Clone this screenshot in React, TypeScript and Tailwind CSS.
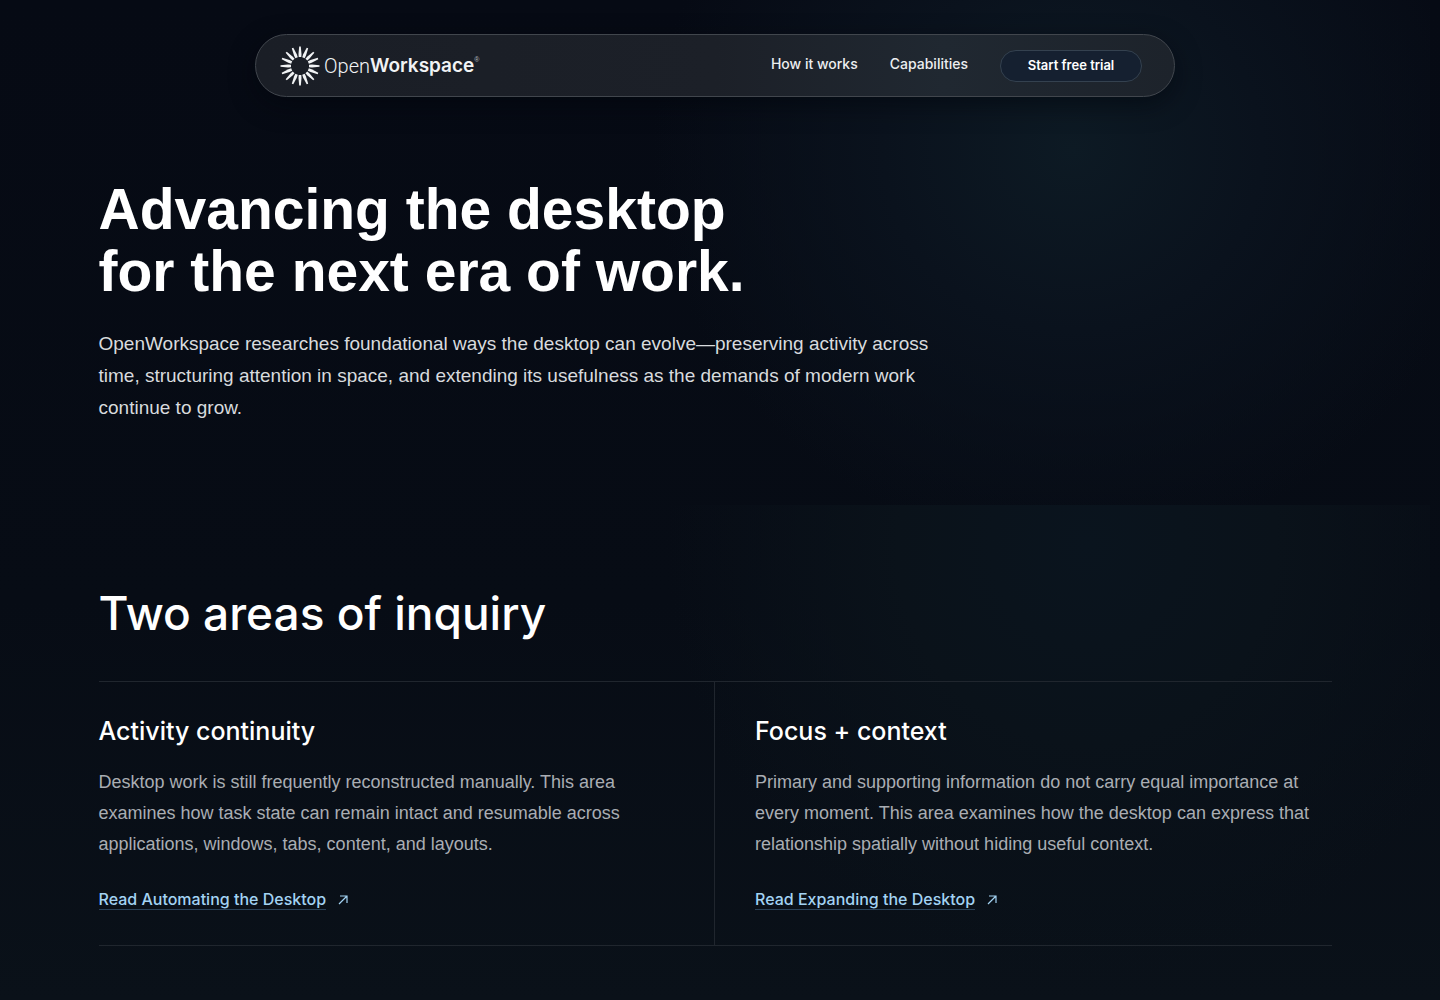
import React from "react";

const rays = Array.from({ length: 16 }, (_, i) => i * 22.5);

function Logo() {
  return (
    <a href="#home" aria-label="OpenWorkspace home" className="flex items-center gap-1 text-[#f1f3f5]">
      <svg viewBox="-20 -20 40 40" className="size-10" fill="currentColor" aria-hidden="true">
        {rays.map((a) => (
          <path key={a} d="M-1.3 -9 L-1.5 -12 L-0.8 -19.5 H0.8 L1.5 -12 L1.3 -9 Z" transform={`rotate(${a})`} />
        ))}
      </svg>
      <span className="flex items-start text-xl leading-6">
        <span className="font-[Roboto,sans-serif] font-light">Open</span>
        <span className="font-[Inter,sans-serif] text-[19px] font-semibold">Workspace</span>
        <span className="text-[7px] leading-3 text-[#b4b8bd]">®</span>
      </span>
    </a>
  );
}

function Arrow() {
  return (
    <svg viewBox="0 0 10 10" className="size-[10px]" fill="none" stroke="currentColor" strokeWidth="1.2" aria-hidden="true">
      <path d="M1 9 9 1M2 1H9V8" />
    </svg>
  );
}

function Area({ title, text, link, className }: { title: string; text: string; link: string; className: string }) {
  return (
    <article className={className}>
      <h3 className="font-[Inter,sans-serif] text-[25px] leading-[34px] font-medium text-white">{title}</h3>
      <p className="mt-[19px] text-lg leading-[31px] text-[#a9adb3]">{text}</p>
      <a href="#read" className="mt-[29px] inline-flex items-center gap-3 font-[Inter,sans-serif] text-base leading-5 font-medium text-[#a3d3f3]">
        <span className="border-b border-[#2b4258]">{link}</span>
        <Arrow />
      </a>
    </article>
  );
}

export default function App() {
  return (
    <div className="min-h-screen bg-[linear-gradient(180deg,#060a14_0%,#070c15_60%,#0a1119_100%)] pr-[10px] font-['Liberation_Sans',Arial,sans-serif] text-white">
      <div className="bg-[radial-gradient(ellipse_420px_400px_at_75%_150px,#0d1a24_0%,#0a121d_45%,transparent_100%)]">
        <header className="px-6 pt-[34px]">
          <nav className="mx-auto flex h-[63px] max-w-[920px] items-center justify-between rounded-full border border-[#41464d] bg-[linear-gradient(90deg,#1a1e26,#1c2028_50%,#202831_75%,#1d232b)] pr-8 pl-6 shadow-[0_8px_24px_#02050c80]">
            <Logo />
            <div className="flex items-center gap-8 font-[Inter,sans-serif] text-sm font-medium text-[#eceef0]">
              <a href="#how" className="pb-1">How it works</a>
              <a href="#capabilities" className="pb-1">Capabilities</a>
              <button type="button" className="h-8 w-[142px] rounded-full border border-[#34414f] bg-[#152030] text-[13px] font-semibold text-white">
                Start free trial
              </button>
            </div>
          </nav>
        </header>
        <section className="mx-auto max-w-[1233px] pt-[81px] pb-[81px]">
          <h1 className="text-[57px] leading-[62px] font-bold">
            Advancing the desktop
            <br />
            for the next era of work.
          </h1>
          <p className="mt-[26px] max-w-[860px] text-[19px] leading-8 text-[#d8dbde]">
            OpenWorkspace researches foundational ways the desktop can evolve—preserving activity across time, structuring attention in space, and extending its usefulness as the demands of modern work continue to grow.
          </p>
        </section>
      </div>
      <section className="bg-[radial-gradient(ellipse_420px_440px_at_76%_40px,#0a141e_0%,#0a121a_45%,transparent_100%)] pt-20 pb-[54px]">
        <div className="mx-auto max-w-[1233px]">
          <h2 className="font-[Inter,sans-serif] text-[46px] leading-[56px] font-medium">Two areas of inquiry</h2>
          <div className="mt-10 grid grid-cols-2 border-y border-[#20262e]">
            <Area
              className="border-r border-[#20262e] pt-8 pr-10 pb-[33px]"
              title="Activity continuity"
              text="Desktop work is still frequently reconstructed manually. This area examines how task state can remain intact and resumable across applications, windows, tabs, content, and layouts."
              link="Read Automating the Desktop"
            />
            <Area
              className="pt-8 pb-[33px] pl-10"
              title="Focus + context"
              text="Primary and supporting information do not carry equal importance at every moment. This area examines how the desktop can express that relationship spatially without hiding useful context."
              link="Read Expanding the Desktop"
            />
          </div>
        </div>
      </section>
    </div>
  );
}
